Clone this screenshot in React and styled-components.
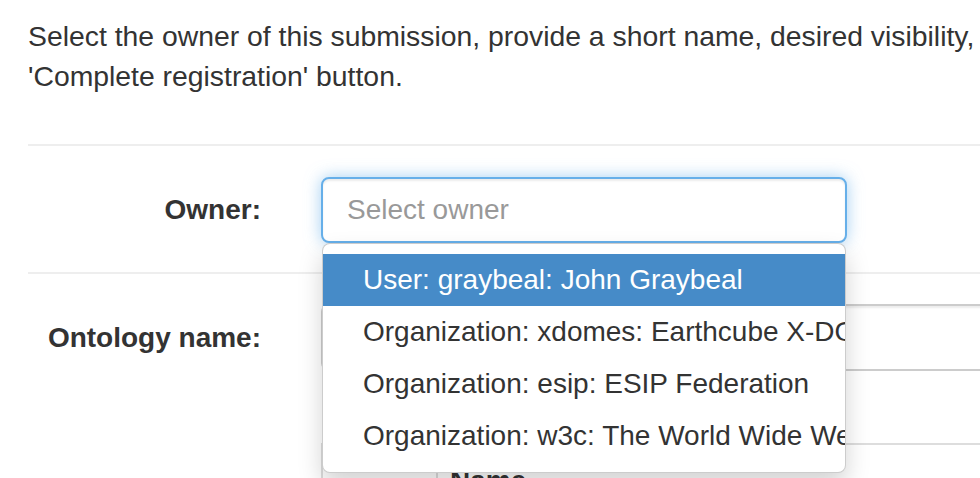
import React from "react";
import styled, { createGlobalStyle } from "styled-components";

const GlobalStyle = createGlobalStyle`
  html, body {
    margin: 0;
    padding: 0;
    overflow: hidden;
    background: #fff;
  }
  body {
    font-family: "Liberation Sans", Helvetica, Arial, sans-serif;
    color: #333;
  }
`;

const Page = styled.div`
  box-sizing: border-box;
  width: 1400px;
  padding: 16px 0 0 28px;
`;

const Intro = styled.p`
  margin: 0;
  font-size: 28.35px;
  line-height: 40px;
`;

const Divider = styled.div`
  height: 2px;
  background: #eee;
  margin-top: ${(p) => p.$top}px;
`;

const FormRow = styled.div`
  display: flex;
  align-items: ${(p) => (p.$top ? "flex-start" : "center")};
  margin-top: ${(p) => p.$gap}px;
`;

const Label = styled.label`
  flex: 0 0 233px;
  margin-right: 60px;
  text-align: right;
  font-size: 28px;
  line-height: 40px;
  font-weight: bold;
`;

const Control = styled.div`
  position: relative;
  flex: ${(p) => (p.$width ? `0 0 ${p.$width}px` : "1")};
  z-index: ${(p) => (p.$raised ? 10 : "auto")};
`;

const Field = styled.input`
  display: block;
  box-sizing: border-box;
  width: 100%;
  height: ${(p) => p.$height}px;
  padding: 0 24px;
  font-family: inherit;
  font-size: 28px;
  color: #555;
  background: #fff;
  border: 2px solid ${(p) => (p.$focused ? "#66afe9" : "#ccc")};
  border-radius: 8px;
  outline: none;
  box-shadow: ${(p) =>
    p.$focused
      ? "inset 0 2px 2px rgba(0,0,0,.075), 0 0 16px rgba(102,175,233,.6)"
      : "inset 0 2px 2px rgba(0,0,0,.075)"};

  &::placeholder {
    color: #999;
  }
`;

const Menu = styled.ul`
  position: absolute;
  top: 100%;
  left: 1px;
  right: 1px;
  margin: 0;
  padding: 10px 0;
  list-style: none;
  background: #fff;
  border: 1px solid rgba(0, 0, 0, 0.2);
  border-radius: 8px;
  box-shadow: 0 12px 24px rgba(0, 0, 0, 0.175);
`;

const MenuItem = styled.li`
  padding: 6px 40px;
  font-size: 28px;
  line-height: 40px;
  white-space: nowrap;
  overflow: hidden;
  color: ${(p) => (p.$active ? "#fff" : "#333")};
  background: ${(p) => (p.$active ? "#468bc8" : "transparent")};
`;

const Table = styled.table`
  width: 100%;
  border-collapse: collapse;
  border: 2px solid #ddd;
`;

const HeadCell = styled.th`
  width: ${(p) => (p.$width ? `${p.$width}px` : "auto")};
  padding: 16px 12px;
  border-left: 2px solid #ddd;
  text-align: left;
  font-size: 28px;
  line-height: 40px;
  font-weight: bold;
`;

const owners = [
  "User: graybeal: John Graybeal",
  "Organization: xdomes: Earthcube X-DOMES",
  "Organization: esip: ESIP Federation",
  "Organization: w3c: The World Wide Web Consortium",
];

export default function App() {
  return (
    <>
      <GlobalStyle />
      <Page>
        <Intro>
          Select the owner of this submission, provide a short name, desired visibility, and then click the
          <br />
          'Complete registration' button.
        </Intro>

        <Divider $top={48} />

        <FormRow $gap={31}>
          <Label>Owner:</Label>
          <Control $width={526} $raised>
            <Field $height={66} $focused placeholder="Select owner" readOnly />
            <Menu>
              {owners.map((o, i) => (
                <MenuItem key={o} $active={i === 0}>
                  {o}
                </MenuItem>
              ))}
            </Menu>
          </Control>
        </FormRow>

        <Divider $top={29} />

        <FormRow $gap={30}>
          <Label>Ontology name:</Label>
          <Control>
            <Field $height={67} readOnly />
          </Control>
        </FormRow>

        <FormRow $gap={72} $top>
          <Label />
          <Control>
            <Table>
              <thead>
                <tr>
                  <HeadCell $width={89} />
                  <HeadCell>Name</HeadCell>
                </tr>
              </thead>
            </Table>
          </Control>
        </FormRow>
      </Page>
    </>
  );
}
